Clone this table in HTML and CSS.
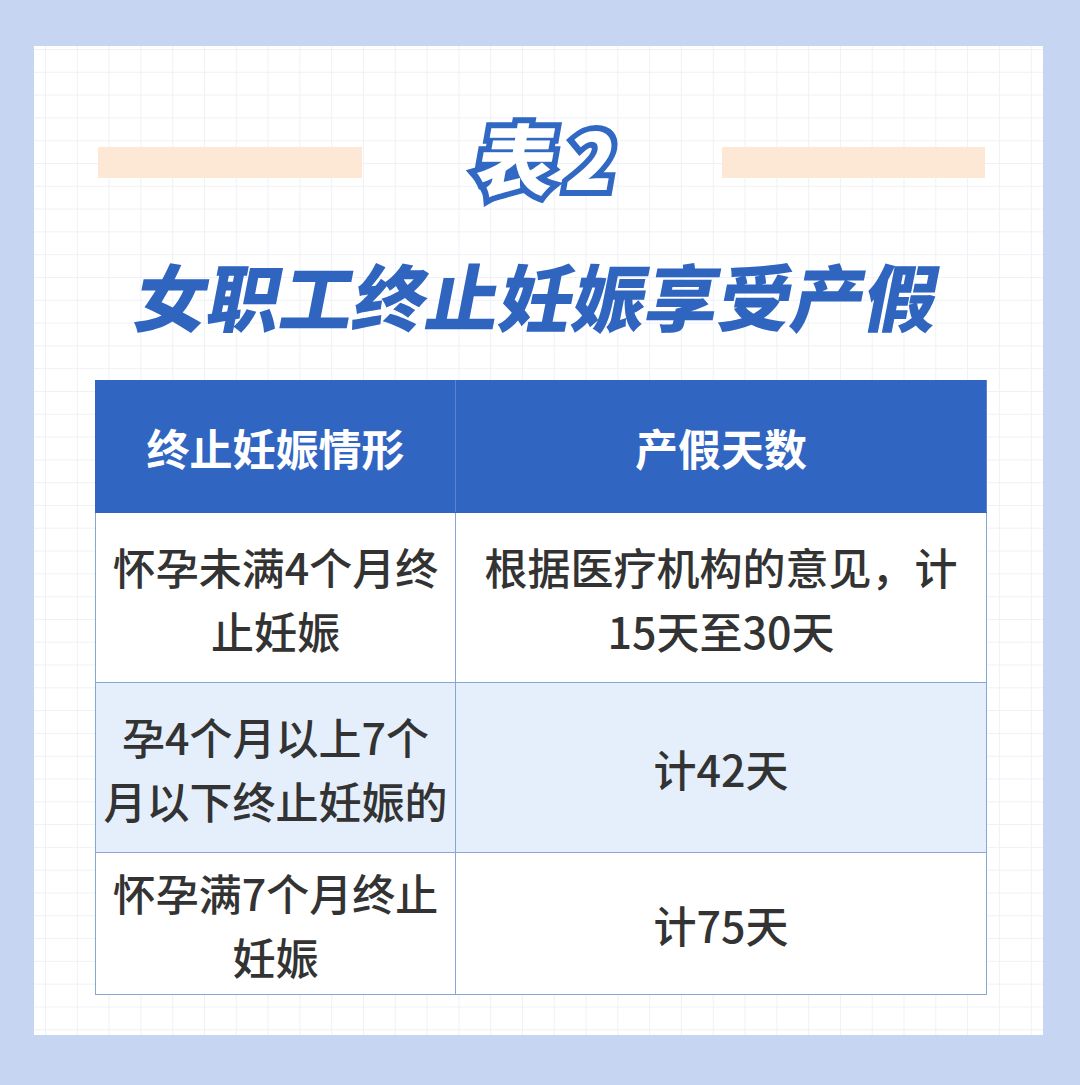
FILE: index.html
```html
<!DOCTYPE html>
<html lang="zh-CN">
<head>
<meta charset="utf-8">
<title>表2 女职工终止妊娠享受产假</title>
<link rel="stylesheet" href="styles.css">
</head>
<body>
<main class="card">
  <div class="heading">
    <span class="bar"></span>
    <h2 class="label"><span class="label-text">表2</span></h2>
    <span class="bar"></span>
  </div>
  <h1 class="title"><span class="title-text">女职工终止妊娠享受产假</span></h1>
  <table class="leave">
    <colgroup>
      <col class="col-a">
      <col class="col-b">
    </colgroup>
    <thead>
      <tr>
        <th>终止妊娠情形</th>
        <th>产假天数</th>
      </tr>
    </thead>
    <tbody>
      <tr class="row-1">
        <td>怀孕未满4个月终<br>止妊娠</td>
        <td>根据医疗机构的意见，计<br>15天至30天</td>
      </tr>
      <tr class="row-2 alt">
        <td>孕4个月以上7个<br>月以下终止妊娠的</td>
        <td>计42天</td>
      </tr>
      <tr class="row-3">
        <td>怀孕满7个月终止<br>妊娠</td>
        <td>计75天</td>
      </tr>
    </tbody>
  </table>
</main>
</body>
</html>
```
FILE: styles.css
```css
html, body {
  margin: 0;
  padding: 0;
}
body {
  background: #c6d6f2;
  width: 1080px;
  height: 1085px;
  overflow: hidden;
  font-family: "Noto Sans CJK SC", "Noto Sans", sans-serif;
}
.card {
  box-sizing: border-box;
  margin: 46px 37px 0 34px;
  width: 1009px;
  height: 989px;
  background-color: #ffffff;
  background-image:
    linear-gradient(to right, #eef1f6 1px, transparent 1px),
    linear-gradient(to bottom, #eef1f6 1px, transparent 1px);
  background-size: 31.8px 22.8px;
  background-position: 11px 3px;
  padding-top: 100px;
}
.heading {
  display: grid;
  grid-template-columns: 264px 1fr 263px;
  align-items: center;
  padding: 0 58px 0 64px;
  height: 32px;
}
.bar {
  display: block;
  height: 31px;
  background: #fde8d6;
}
.label {
  margin: 0;
  text-align: center;
  font-size: 78px;
  font-weight: 900;
  line-height: 32px;
  height: 32px;
}
.label-text {
  display: inline-block;
  color: #ffffff;
  -webkit-text-stroke: 12px #3068c4;
  paint-order: stroke fill;
  transform: skewX(-10deg);
  letter-spacing: 12px;
  margin-left: 24px;
  position: relative;
  top: -6px;
}
.title {
  margin: 76px 0 0;
  height: 80px;
  text-align: center;
  font-size: 73px;
  font-weight: 900;
  line-height: 80px;
  color: #2f64bf;
}
.title-text {
  display: inline-block;
  transform: skewX(-11deg);
}
.leave {
  margin: 46px 0 0 61px;
  width: 891px;
  border-collapse: collapse;
  table-layout: fixed;
  font-size: 43px;
}
.col-a { width: 360px; }
.col-b { width: 531px; }
.leave th,
.leave td {
  border: 1px solid #86a6d6;
  text-align: center;
  vertical-align: middle;
  padding: 0 2px;
  line-height: 64px;
}
.leave th {
  background: #3165c2;
  color: #ffffff;
  font-weight: 700;
  height: 131px;
  border-color: #3165c2;
  border-right-color: #5a84cf;
}
.leave td {
  color: #333333;
  font-weight: 500;
  background: #ffffff;
}
.row-1 td { height: 169px; }
.row-2 td { height: 169px; }
.row-3 td { height: 141px; }
.leave tr.alt td {
  background: #e5effc;
}
```
